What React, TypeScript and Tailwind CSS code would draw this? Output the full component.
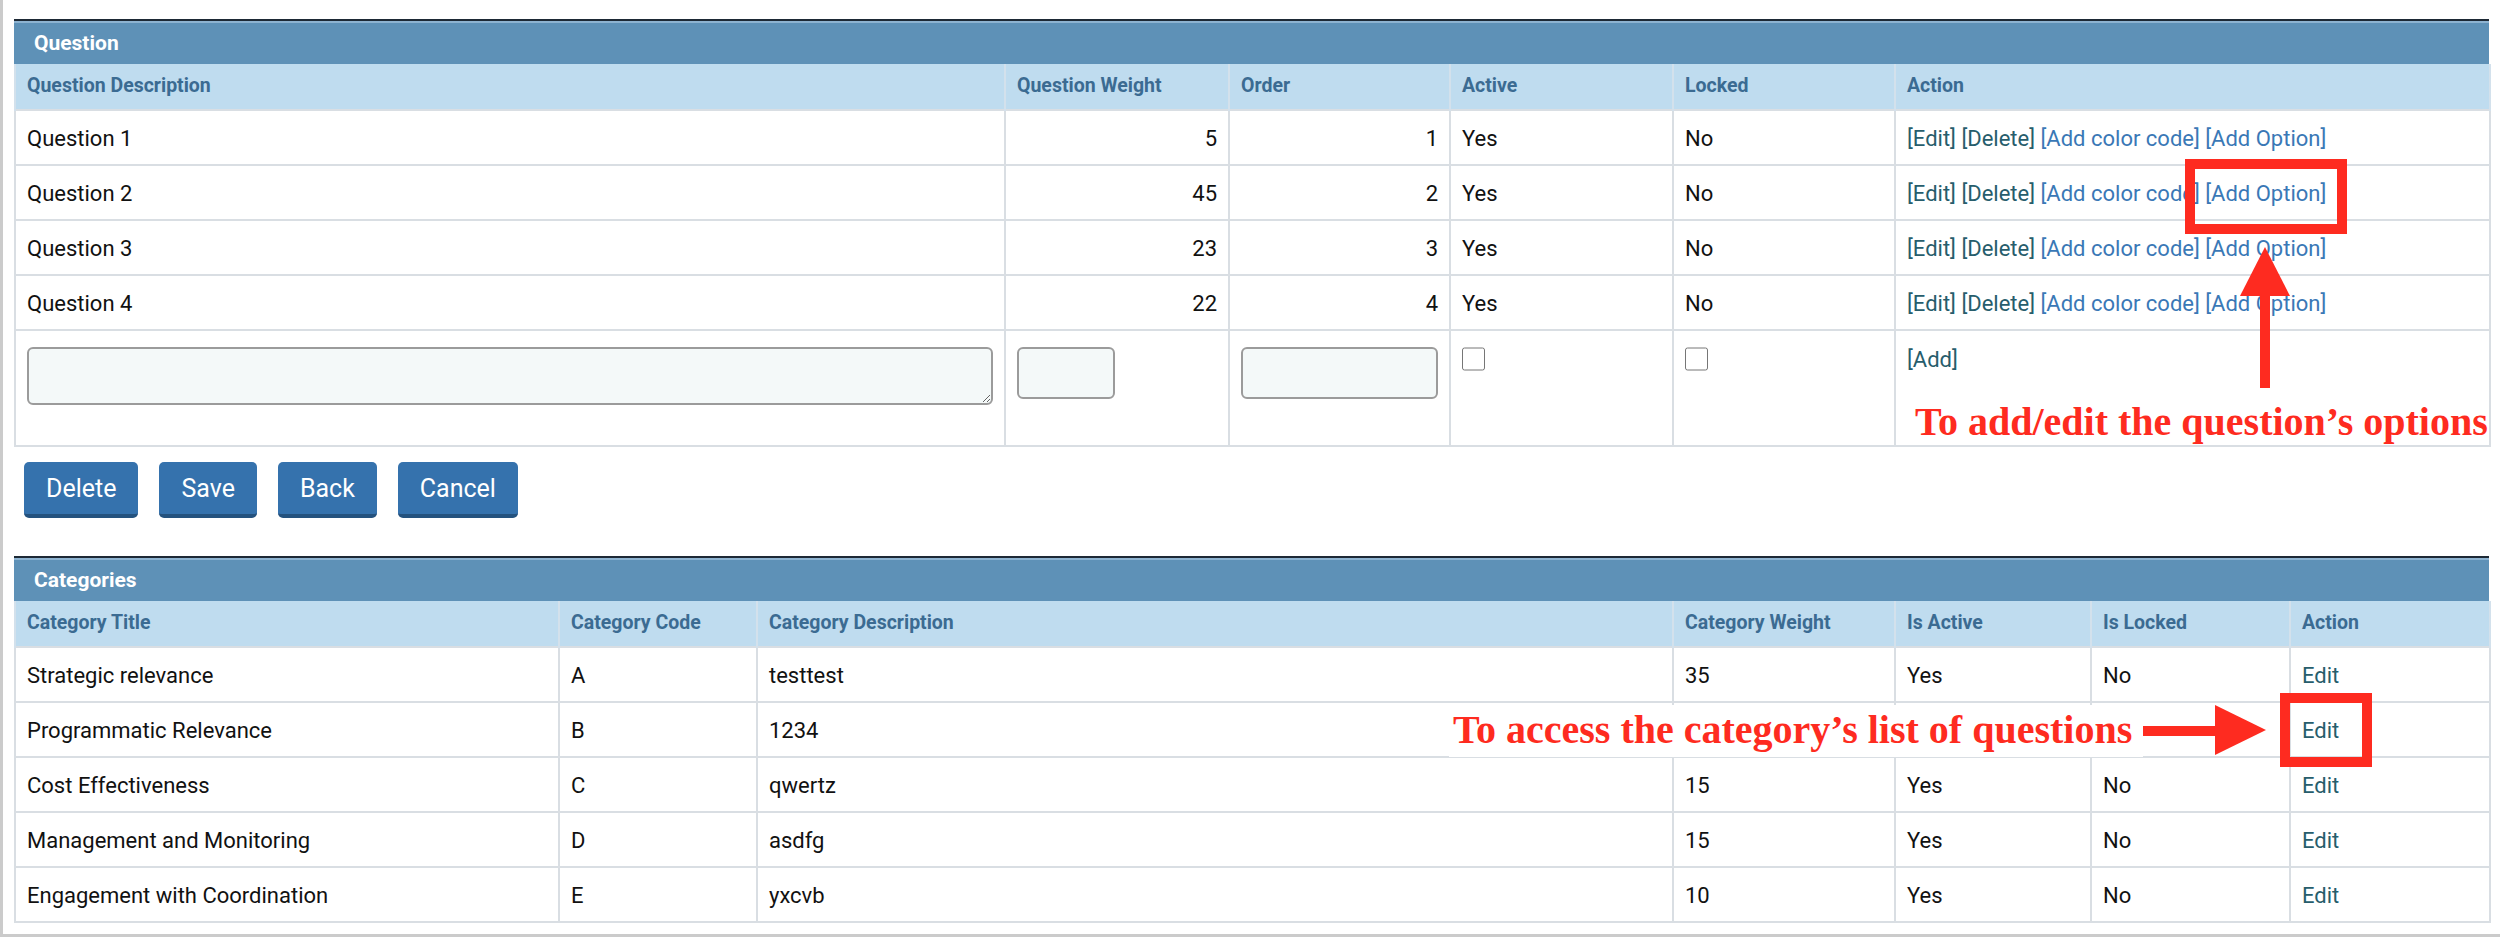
import React from "react";

const qRows = [
  { d: "Question 1", w: 5, o: 1 },
  { d: "Question 2", w: 45, o: 2 },
  { d: "Question 3", w: 23, o: 3 },
  { d: "Question 4", w: 22, o: 4 },
];

const cRows = [
  { t: "Strategic relevance", c: "A", d: "testtest", w: "35", a: "Yes", l: "No" },
  { t: "Programmatic Relevance", c: "B", d: "1234", w: "", a: "", l: "" },
  { t: "Cost Effectiveness", c: "C", d: "qwertz", w: "15", a: "Yes", l: "No" },
  { t: "Management and Monitoring", c: "D", d: "asdfg", w: "15", a: "Yes", l: "No" },
  { t: "Engagement with Coordination", c: "E", d: "yxcvb", w: "10", a: "Yes", l: "No" },
];

const td = "border-2 border-[#d9dee3] px-[11px] pt-[2px] align-middle";
const th =
  "border-x-2 border-[#d3e1ec] px-[11px] pb-[1px] text-left align-middle text-[19.5px] font-bold text-[#3b6b92]";

function PanelHeader({ title }: { title: string }) {
  return (
    <div className="border-t-2 border-[#1d2935]">
      <div className="flex h-[43px] items-center border-t-2 border-[#8db3d1] bg-[#5e91b7] pl-[20px] text-[21px] font-bold text-white">
        {title}
      </div>
    </div>
  );
}

function Actions() {
  return (
    <span className="whitespace-nowrap">
      <span className="text-[#275d6c]">[Edit]</span>{" "}
      <span className="text-[#275d6c]">[Delete]</span>{" "}
      <span className="text-[#3a78b6]">[Add color code]</span>{" "}
      <span className="text-[#3a78b6]">[Add Option]</span>
    </span>
  );
}

function Btn({ label }: { label: string }) {
  return (
    <button className="flex h-[56px] items-center rounded-[5px] border-b-4 border-[#24527e] bg-[#3572ad] px-[22px] pt-[2px] text-[25px] text-white">
      {label}
    </button>
  );
}

export default function App() {
  return (
    <div className="relative h-[940px] w-[2500px] overflow-hidden bg-white font-[Roboto,'Liberation_Sans',sans-serif] text-[22px] text-[#111]">
      <div className="h-[937px] w-[2600px] border-b-[3px] border-l-[3px] border-[#cbcbcb] pl-[11px] pt-[19px]">
        {/* Question panel */}
        <div className="w-[2475px]">
          <PanelHeader title="Question" />
          <table className="w-[2475px] table-fixed border-collapse">
            <colgroup>
              <col className="w-[990px]" />
              <col className="w-[224px]" />
              <col className="w-[221px]" />
              <col className="w-[223px]" />
              <col className="w-[222px]" />
              <col className="w-[595px]" />
            </colgroup>
            <thead>
              <tr className="h-[46px] bg-[#bfdcef]">
                <th className={th}>Question Description</th>
                <th className={th}>Question Weight</th>
                <th className={th}>Order</th>
                <th className={th}>Active</th>
                <th className={th}>Locked</th>
                <th className={th}>Action</th>
              </tr>
            </thead>
            <tbody>
              {qRows.map((r) => (
                <tr key={r.d} className="h-[55px]">
                  <td className={td}>{r.d}</td>
                  <td className={td + " text-right"}>{r.w}</td>
                  <td className={td + " text-right"}>{r.o}</td>
                  <td className={td}>Yes</td>
                  <td className={td}>No</td>
                  <td className={td}>
                    <Actions />
                  </td>
                </tr>
              ))}
              <tr className="h-[116px]">
                <td className="border-2 border-[#d9dee3] px-[11px] pt-[16px] align-top">
                  <textarea className="block h-[58px] w-full rounded-[6px] border-2 border-[#9b9b9b] bg-[#f4f9f9]" />
                </td>
                <td className="border-2 border-[#d9dee3] px-[11px] pt-[16px] align-top">
                  <input className="block h-[52px] w-[98px] rounded-[6px] border-2 border-[#9b9b9b] bg-[#f4f9f9]" />
                </td>
                <td className="border-2 border-[#d9dee3] px-[11px] pt-[16px] align-top">
                  <input className="block h-[52px] w-full rounded-[6px] border-2 border-[#9b9b9b] bg-[#f4f9f9]" />
                </td>
                <td className="border-2 border-[#d9dee3] px-[11px] pt-[16px] align-top">
                  <input type="checkbox" className="m-0 block h-[24px] w-[23px]" />
                </td>
                <td className="border-2 border-[#d9dee3] px-[11px] pt-[16px] align-top">
                  <input type="checkbox" className="m-0 block h-[24px] w-[23px]" />
                </td>
                <td className="border-2 border-[#d9dee3] px-[11px] pt-[15px] align-top leading-[28px] text-[#275d6c]">
                  [Add]
                </td>
              </tr>
            </tbody>
          </table>
        </div>

        {/* Buttons */}
        <div className="mt-[15px] flex gap-[21px] pl-[10px]">
          <Btn label="Delete" />
          <Btn label="Save" />
          <Btn label="Back" />
          <Btn label="Cancel" />
        </div>

        {/* Categories panel */}
        <div className="mt-[38px] w-[2475px]">
          <PanelHeader title="Categories" />
          <table className="w-[2475px] table-fixed border-collapse">
            <colgroup>
              <col className="w-[544px]" />
              <col className="w-[198px]" />
              <col className="w-[916px]" />
              <col className="w-[222px]" />
              <col className="w-[196px]" />
              <col className="w-[199px]" />
              <col className="w-[200px]" />
            </colgroup>
            <thead>
              <tr className="h-[46px] bg-[#bfdcef]">
                <th className={th}>Category Title</th>
                <th className={th}>Category Code</th>
                <th className={th}>Category Description</th>
                <th className={th}>Category Weight</th>
                <th className={th}>Is Active</th>
                <th className={th}>Is Locked</th>
                <th className={th}>Action</th>
              </tr>
            </thead>
            <tbody>
              {cRows.map((r) => (
                <tr key={r.c} className="h-[55px]">
                  <td className={td}>{r.t}</td>
                  <td className={td}>{r.c}</td>
                  <td className={td}>{r.d}</td>
                  <td className={td}>{r.w}</td>
                  <td className={td}>{r.a}</td>
                  <td className={td}>{r.l}</td>
                  <td className={td + " text-[#275d6c]"}>Edit</td>
                </tr>
              ))}
            </tbody>
          </table>
        </div>
      </div>

      {/* Annotation 1: Add Option */}
      <div className="absolute left-[2185px] top-[159px] h-[75px] w-[162px] border-[10px] border-[#fe2b20]" />
      <svg className="absolute left-[2240px] top-[247px]" width="50" height="49" viewBox="0 0 50 49">
        <polygon points="25,0 50,49 0,49" fill="#fe2b20" />
      </svg>
      <div className="absolute left-[2260px] top-[295px] h-[93px] w-[10px] bg-[#fe2b20]" />
      <div className="absolute left-[1915px] top-[402px] whitespace-nowrap font-['Liberation_Serif','Times_New_Roman',serif] text-[40px] font-bold leading-[40px] text-[#fe2b20]">
        To add/edit the question’s options
      </div>

      {/* Annotation 2: Category Edit */}
      <div className="absolute left-[1449px] top-[705px] h-[52px] w-[694px] bg-white pl-[4px] pt-[5px] whitespace-nowrap font-['Liberation_Serif','Times_New_Roman',serif] text-[40px] font-bold leading-[40px] text-[#fe2b20]">
        To access the category’s list of questions
      </div>
      <div className="absolute left-[2143px] top-[726px] h-[10px] w-[75px] bg-[#fe2b20]" />
      <svg className="absolute left-[2215px] top-[705px]" width="51" height="50" viewBox="0 0 51 50">
        <polygon points="0,0 51,25 0,50" fill="#fe2b20" />
      </svg>
      <div className="absolute left-[2280px] top-[693px] h-[74px] w-[92px] border-[10px] border-[#fe2b20]" />
    </div>
  );
}
